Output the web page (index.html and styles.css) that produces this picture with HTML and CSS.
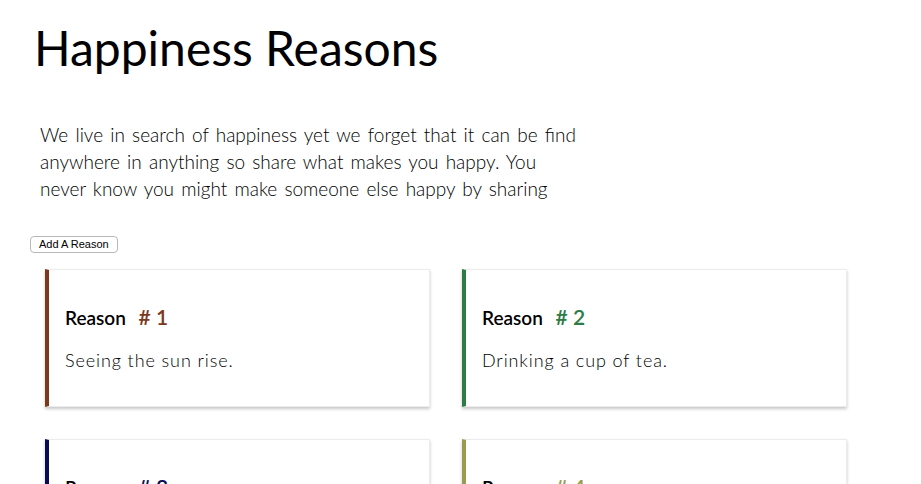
FILE: index.html
```html
<!DOCTYPE html>
<html lang="en">
<head>
<meta charset="utf-8">
<title>Happiness Reasons</title>
<link rel="stylesheet" href="styles.css">
</head>
<body>
  <main class="page">
    <h1 class="title">Happiness Reasons</h1>
    <p class="intro">We live in search of happiness yet we forget that it can be find anywhere in anything so share what makes you happy. You never know you might make someone else happy by sharing</p>
    <button class="add-btn" type="button">Add A Reason</button>
    <section class="reasons">
      <article class="card card-1">
        <h3 class="card-title">Reason <span class="num"># 1</span></h3>
        <p class="card-text">Seeing the sun rise.</p>
      </article>
      <article class="card card-2">
        <h3 class="card-title">Reason <span class="num"># 2</span></h3>
        <p class="card-text">Drinking a cup of tea.</p>
      </article>
      <article class="card card-3">
        <h3 class="card-title">Reason <span class="num"># 3</span></h3>
        <p class="card-text">Listening to good music.</p>
      </article>
      <article class="card card-4">
        <h3 class="card-title">Reason <span class="num"># 4</span></h3>
        <p class="card-text">Spending time with friends.</p>
      </article>
    </section>
  </main>
</body>
</html>
```

FILE: styles.css
```css
* { box-sizing: border-box; }

body {
  margin: 0;
  background: #fff;
  color: #000;
  font-family: Lato, "Noto Sans", sans-serif;
}

.page {
  padding: 17px 0 40px 0;
}

.title {
  margin: 0 0 0 34px;
  font-size: 48px;
  font-weight: 400;
  line-height: 61px;
}

.intro {
  margin: 43px 0 0 40px;
  width: 545px;
  font-size: 19px;
  font-weight: 300;
  line-height: 27px;
  word-spacing: 2px;
  color: #000;
}

.add-btn {
  display: block;
  margin: 34px 0 0 30px;
  height: 17px;
  padding: 0 8px;
  font-family: "Liberation Sans", Arial, sans-serif;
  font-size: 11px;
  line-height: 15px;
  color: #000;
  background: #fff;
  border: 1px solid #b8b8b8;
  border-radius: 4px;
}

.reasons {
  margin: 16px 0 0 45px;
  display: grid;
  grid-template-columns: 385px 385px;
  column-gap: 32px;
  row-gap: 32px;
}

.card {
  height: 138px;
  padding: 35px 16px 0 16px;
  background: #fff;
  border: 1px solid #ececec;
  border-left: 4px solid #7b391e;
  box-shadow: 0 2px 3px rgba(0, 0, 0, 0.22);
}

.card-title {
  margin: 0;
  font-size: 19px;
  font-weight: 600;
  line-height: 24px;
}

.num {
  margin-left: 8px;
  font-size: 21px;
}

.card-text {
  margin: 17px 0 0 0;
  font-size: 18px;
  font-weight: 300;
  line-height: 27px;
  letter-spacing: 0.9px;
}

.card-1 { border-left-color: #7b391e; }
.card-1 .num { color: #7b391e; }
.card-2 { border-left-color: #2d7b45; }
.card-2 .num { color: #2d7b45; }
.card-3 { border-left-color: #0b0b55; }
.card-3 .num { color: #0b0b55; }
.card-4 { border-left-color: #9b9a50; }
.card-4 .num { color: #9b9a50; }
```
